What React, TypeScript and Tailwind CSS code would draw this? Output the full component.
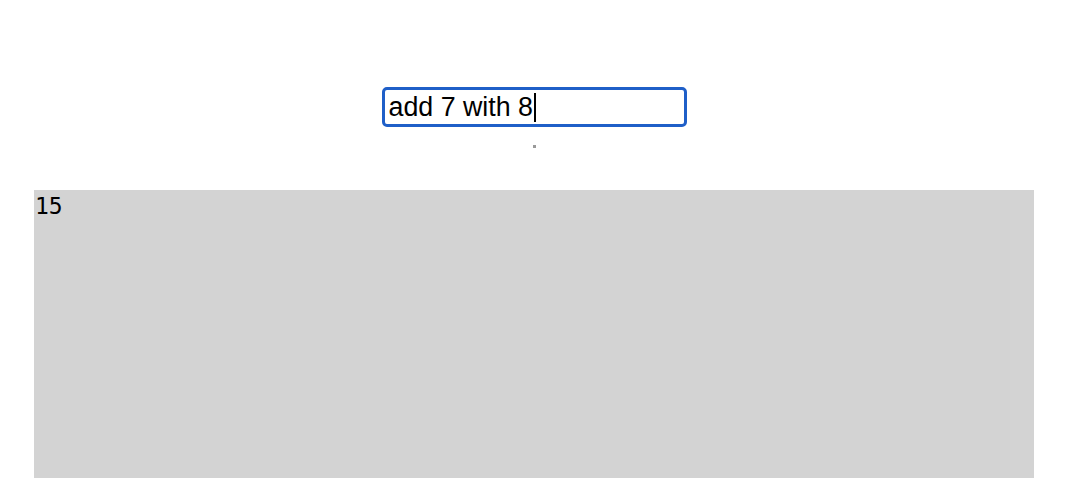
export default function App() {
  return (
    <div className="flex flex-col items-center bg-white min-h-[478px] overflow-hidden pr-[4px]">
      {/* Prompt */}
      <div className="mt-[87px] w-[305px] h-[40px] border-[3px] border-[#1f5fc8] rounded-[5px] flex items-center pl-[4px] pr-[3px]">
        <span className="text-[26.8px] leading-none text-black" style={{ fontFamily: '"Liberation Sans", Arial, sans-serif' }}>
          add 7 with 8
        </span>
        <span className="w-[2px] h-[29px] bg-black ml-[1px]" />
      </div>

      {/* tiny marker */}
      <div className="mt-[18px] w-[3px] h-[3px] bg-[#9a9a9a]" />

      {/* Output */}
      <div className="mt-[42px] w-[1000px] h-[300px] bg-[#d3d3d3] px-[1px] pt-[3px]">
        <pre className="text-[23px] leading-[27px] text-black" style={{ fontFamily: '"DejaVu Sans Mono", monospace' }}>15</pre>
      </div>
    </div>
  )
}
